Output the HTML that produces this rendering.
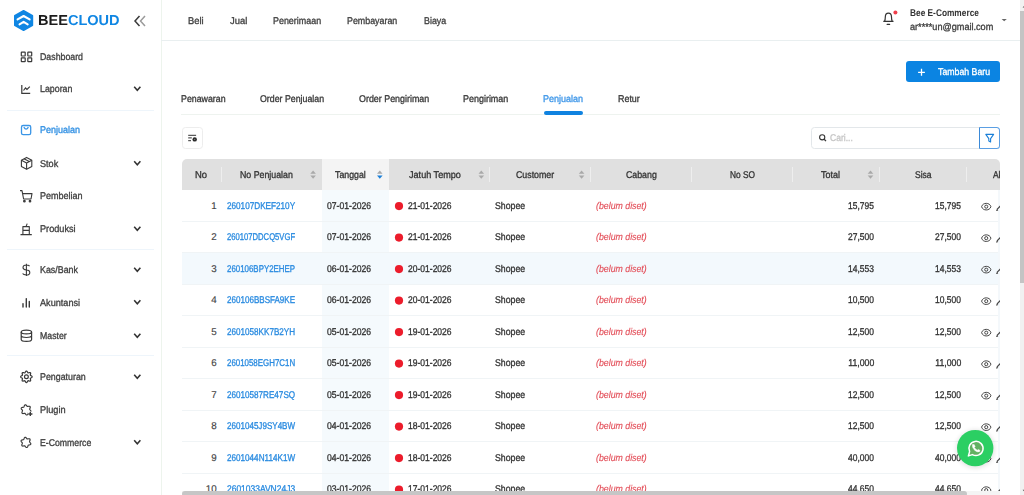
<!DOCTYPE html><html><head><meta charset="utf-8"><style>

*{margin:0;padding:0;box-sizing:border-box}
html,body{width:1024px;height:495px;overflow:hidden;background:#fff;font-family:"Liberation Sans",sans-serif;}
.abs{position:absolute;}
.t{position:absolute;white-space:nowrap;line-height:1;-webkit-text-stroke:0.32px currentColor;text-rendering:geometricPrecision;}
svg{position:absolute;overflow:visible}

</style></head><body>
<div class="abs" style="left:1020px;top:0px;width:4px;height:495px;background:#f1f1f1"></div>
<div class="abs" style="left:1020px;top:11px;width:4px;height:272px;background:#c4c4c4"></div>
<svg style="left:0;top:0" width="1" height="1"><path d="M1022.6 7.4 L1025.4 4.4 L1028.2 7.4 Z" fill="#505050"/><path d="M1022.6 489.8 L1025.4 492.8 L1028.2 489.8 Z" fill="#505050"/></svg>
<div class="abs" style="left:160.6px;top:0px;width:1.0px;height:495px;background:#edf4ed"></div>
<svg style="left:0;top:0" width="160" height="40" viewBox="0 0 160 40">
<path d="M23.6 10.7 L32.4 15.7 L32.4 25.3 L23.6 30.2 L14.8 25.3 L14.8 15.7 Z" fill="#0f86e3" stroke="#0f86e3" stroke-width="1.6" stroke-linejoin="round"/>
<path d="M17.6 19.4 L23.6 16 L29.6 19.4" fill="none" stroke="#fff" stroke-width="2.1" stroke-linecap="round" stroke-linejoin="round"/>
<path d="M19.5 24.3 L23.6 21.9 L27.7 24.3" fill="none" stroke="#fff" stroke-width="2.1" stroke-linecap="round" stroke-linejoin="round"/>
<path d="M139.5 16 L135 21 L139.5 26" fill="none" stroke="#3a3a3a" stroke-width="1.5"/>
<path d="M145 16 L140.5 21 L145 26" fill="none" stroke="#9a9a9a" stroke-width="1.5"/>
</svg>
<div id="t0" class="t" style="left:38.25px;top:14.16px;font-size:14.4px;color:#3b3b3b;font-weight:bold;font-style:normal;letter-spacing:0px;-webkit-text-stroke:0;transform:scaleX(1.0103);transform-origin:0 0;"><span style="color:#1b1b1b">BEE</span><span style="color:#0f86e3">CLOUD</span></div>
<div id="t1" class="t" style="left:39.95px;top:52.57px;font-size:9.8px;color:#404040;font-weight:normal;font-style:normal;letter-spacing:0px;transform:scaleX(0.8970);transform-origin:0 0;">Dashboard</div>
<div id="t2" class="t" style="left:39.95px;top:85.07px;font-size:9.8px;color:#404040;font-weight:normal;font-style:normal;letter-spacing:0px;transform:scaleX(0.9008);transform-origin:0 0;">Laporan</div>
<svg style="left:0;top:0" width="1" height="1"><path d="M134.2 86.8 L137.3 90.2 L140.4 86.8" fill="none" stroke="#333" stroke-width="1.6"/></svg>
<div id="t3" class="t" style="left:39.95px;top:126.07px;font-size:9.8px;color:#2f8fe3;font-weight:normal;font-style:normal;letter-spacing:0px;transform:scaleX(0.9176);transform-origin:0 0;">Penjualan</div>
<div id="t4" class="t" style="left:39.95px;top:159.57px;font-size:9.8px;color:#404040;font-weight:normal;font-style:normal;letter-spacing:0px;transform:scaleX(0.9281);transform-origin:0 0;">Stok</div>
<svg style="left:0;top:0" width="1" height="1"><path d="M134.2 161.3 L137.3 164.7 L140.4 161.3" fill="none" stroke="#333" stroke-width="1.6"/></svg>
<div id="t5" class="t" style="left:39.95px;top:192.07px;font-size:9.8px;color:#404040;font-weight:normal;font-style:normal;letter-spacing:0px;transform:scaleX(0.9201);transform-origin:0 0;">Pembelian</div>
<div id="t6" class="t" style="left:39.95px;top:225.07px;font-size:9.8px;color:#404040;font-weight:normal;font-style:normal;letter-spacing:0px;transform:scaleX(0.9338);transform-origin:0 0;">Produksi</div>
<svg style="left:0;top:0" width="1" height="1"><path d="M134.2 226.8 L137.3 230.2 L140.4 226.8" fill="none" stroke="#333" stroke-width="1.6"/></svg>
<div id="t7" class="t" style="left:39.95px;top:266.07px;font-size:9.8px;color:#404040;font-weight:normal;font-style:normal;letter-spacing:0px;transform:scaleX(0.9061);transform-origin:0 0;">Kas/Bank</div>
<svg style="left:0;top:0" width="1" height="1"><path d="M134.2 267.8 L137.3 271.2 L140.4 267.8" fill="none" stroke="#333" stroke-width="1.6"/></svg>
<div id="t8" class="t" style="left:39.95px;top:298.57px;font-size:9.8px;color:#404040;font-weight:normal;font-style:normal;letter-spacing:0px;transform:scaleX(0.9319);transform-origin:0 0;">Akuntansi</div>
<svg style="left:0;top:0" width="1" height="1"><path d="M134.2 300.3 L137.3 303.7 L140.4 300.3" fill="none" stroke="#333" stroke-width="1.6"/></svg>
<div id="t9" class="t" style="left:39.95px;top:332.07px;font-size:9.8px;color:#404040;font-weight:normal;font-style:normal;letter-spacing:0px;transform:scaleX(0.8914);transform-origin:0 0;">Master</div>
<svg style="left:0;top:0" width="1" height="1"><path d="M134.2 333.8 L137.3 337.2 L140.4 333.8" fill="none" stroke="#333" stroke-width="1.6"/></svg>
<div id="t10" class="t" style="left:39.95px;top:373.07px;font-size:9.8px;color:#404040;font-weight:normal;font-style:normal;letter-spacing:0px;transform:scaleX(0.9039);transform-origin:0 0;">Pengaturan</div>
<svg style="left:0;top:0" width="1" height="1"><path d="M134.2 374.8 L137.3 378.2 L140.4 374.8" fill="none" stroke="#333" stroke-width="1.6"/></svg>
<div id="t11" class="t" style="left:39.95px;top:405.57px;font-size:9.8px;color:#404040;font-weight:normal;font-style:normal;letter-spacing:0px;transform:scaleX(0.9400);transform-origin:0 0;">Plugin</div>
<div id="t12" class="t" style="left:39.95px;top:438.57px;font-size:9.8px;color:#404040;font-weight:normal;font-style:normal;letter-spacing:0px;transform:scaleX(0.8890);transform-origin:0 0;">E-Commerce</div>
<svg style="left:0;top:0" width="1" height="1"><path d="M134.2 440.3 L137.3 443.7 L140.4 440.3" fill="none" stroke="#333" stroke-width="1.6"/></svg>
<div class="abs" style="left:7px;top:109.5px;width:147px;height:1.0px;background:#eef5fb"></div>
<div class="abs" style="left:7px;top:249.0px;width:147px;height:1.0px;background:#eef5fb"></div>
<div class="abs" style="left:7px;top:355.0px;width:147px;height:1.0px;background:#eef5fb"></div>

<svg style="left:0;top:0" width="160" height="495">
<g fill="none" stroke="#3a3a3a" stroke-width="1.2">
 <rect x="21.3" y="52.1" width="3.9" height="3.9" rx="0.5"/>
 <rect x="27.8" y="52.1" width="3.9" height="3.9" rx="0.5"/>
 <rect x="21.3" y="57.8" width="3.9" height="3.9" rx="0.5"/>
 <rect x="27.8" y="57.8" width="3.9" height="3.9" rx="0.5"/>
 <path d="M21.8 85 V93.4 H30.2"/>
 <path d="M23.5 90.5 L25.5 88 L27 89.5 L29.8 86.6"/>
</g>
<g fill="none" stroke="#3a95e6" stroke-width="1.3">
 <rect x="21.5" y="125.5" width="9.2" height="9.2" rx="1.6"/>
 <path d="M23.8 127.2 Q26.1 131 28.4 127.2"/>
</g>
<g fill="none" stroke="#3a3a3a" stroke-width="1.1" stroke-linejoin="round">
 <path d="M26.6 157.4 L31.8 160.2 L31.8 166.4 L26.6 169.2 L21.4 166.4 L21.4 160.2 Z"/>
 <path d="M21.4 160.2 L26.6 163 L31.8 160.2 M26.6 163 V169.2 M24 158.8 L29.2 161.6"/>
 <path d="M20 190.6 H22 L23.6 199 H31 L32 193.6 H22.8"/>
 <circle cx="24.4" cy="201.2" r="0.8" fill="#3a3a3a"/><circle cx="30" cy="201.2" r="0.8" fill="#3a3a3a"/>
 <path d="M20.5 234.6 H31.8 M22.9 234.6 V226.6 H29.3 V234.6 M22.9 230.4 H29.3 M26 226.6 L27.2 223.6"/>
 <path d="M26.4 263.8 V276 M29.6 266.2 Q28.6 265 26.4 265 Q23 265 23 267.6 Q23 269.8 26.4 270 Q29.8 270.2 29.8 272.4 Q29.8 275 26.4 275 Q23.4 275 22.6 273.6"/>
</g>
<g fill="none" stroke="#3a3a3a" stroke-width="1.4" stroke-linecap="round">
 <path d="M23 303.6 V307 M26.3 298.6 V307 M29.3 301.4 V307"/>
</g>
<g fill="none" stroke="#3a3a3a" stroke-width="1.2">
 <ellipse cx="26.4" cy="332" rx="5.2" ry="1.9"/>
 <path d="M21.2 332 V339.4 Q21.2 341.3 26.4 341.3 Q31.6 341.3 31.6 339.4 V332 M21.2 335.6 Q21.2 337.5 26.4 337.5 Q31.6 337.5 31.6 335.6"/>
 <circle cx="26.4" cy="376.8" r="1.9"/>
 <path d="M32.15 376.80 L32.04 377.17 L31.73 377.50 L31.30 377.78 L30.87 378.00 L30.52 378.20 L30.33 378.43 L30.30 378.72 L30.41 379.11 L30.56 379.58 L30.66 380.07 L30.65 380.52 L30.47 380.87 L30.12 381.05 L29.67 381.06 L29.18 380.96 L28.71 380.81 L28.32 380.70 L28.03 380.73 L27.80 380.92 L27.60 381.27 L27.38 381.70 L27.10 382.13 L26.77 382.44 L26.40 382.55 L26.03 382.44 L25.70 382.13 L25.42 381.70 L25.20 381.27 L25.00 380.92 L24.77 380.73 L24.48 380.70 L24.09 380.81 L23.62 380.96 L23.13 381.06 L22.68 381.05 L22.33 380.87 L22.15 380.52 L22.14 380.07 L22.24 379.58 L22.39 379.11 L22.50 378.72 L22.47 378.43 L22.28 378.20 L21.93 378.00 L21.50 377.78 L21.07 377.50 L20.76 377.17 L20.65 376.80 L20.76 376.43 L21.07 376.10 L21.50 375.82 L21.93 375.60 L22.28 375.40 L22.47 375.17 L22.50 374.88 L22.39 374.49 L22.24 374.02 L22.14 373.53 L22.15 373.08 L22.33 372.73 L22.68 372.55 L23.13 372.54 L23.62 372.64 L24.09 372.79 L24.48 372.90 L24.77 372.87 L25.00 372.68 L25.20 372.33 L25.42 371.90 L25.70 371.47 L26.03 371.16 L26.40 371.05 L26.77 371.16 L27.10 371.47 L27.38 371.90 L27.60 372.33 L27.80 372.68 L28.03 372.87 L28.32 372.90 L28.71 372.79 L29.18 372.64 L29.67 372.54 L30.12 372.55 L30.47 372.73 L30.65 373.08 L30.66 373.53 L30.56 374.02 L30.41 374.49 L30.30 374.88 L30.33 375.17 L30.52 375.40 L30.87 375.60 L31.30 375.82 L31.73 376.10 L32.04 376.43 Z" stroke-linejoin="round"/>
 <path d="M30.12 409.90 L30.48 410.28 L30.80 410.73 L30.98 411.21 L30.94 411.66 L30.68 412.03 L30.24 412.29 L29.70 412.42 L29.18 412.49 L28.75 412.55 L28.45 412.70 L28.25 412.97 L28.11 413.39 L27.96 413.89 L27.73 414.39 L27.41 414.78 L26.99 414.97 L26.54 414.93 L26.10 414.67 L25.72 414.28 L25.40 413.86 L25.13 413.52 L24.85 413.33 L24.51 413.30 L24.09 413.39 L23.58 413.50 L23.03 413.56 L22.53 413.47 L22.15 413.21 L21.96 412.80 L21.96 412.29 L22.11 411.76 L22.32 411.28 L22.48 410.87 L22.51 410.53 L22.36 410.23 L22.08 409.90 L21.72 409.52 L21.40 409.07 L21.22 408.59 L21.26 408.14 L21.52 407.77 L21.96 407.51 L22.50 407.38 L23.02 407.31 L23.45 407.25 L23.75 407.10 L23.95 406.83 L24.09 406.41 L24.24 405.91 L24.47 405.41 L24.79 405.02 L25.21 404.83 L25.66 404.87 L26.10 405.12 L26.48 405.52 L26.80 405.94 L27.07 406.28 L27.35 406.47 L27.69 406.50 L28.11 406.41 L28.62 406.30 L29.17 406.24 L29.67 406.33 L30.05 406.59 L30.24 407.00 L30.24 407.51 L30.09 408.04 L29.88 408.52 L29.72 408.93 L29.69 409.27 L29.84 409.57 Z" stroke-width="1.15" stroke-linejoin="round"/>
 <rect x="27.9" y="411.6" width="5" height="5" fill="#fff" stroke="none"/>
 <path d="M30.3 411.9 V416.1 M28.2 414 H32.4" stroke-width="1.35"/>
 <path d="M29.98 442.40 L30.33 442.78 L30.65 443.23 L30.83 443.71 L30.79 444.16 L30.53 444.53 L30.09 444.79 L29.55 444.92 L29.03 444.99 L28.60 445.05 L28.30 445.20 L28.10 445.47 L27.96 445.89 L27.81 446.39 L27.58 446.89 L27.26 447.28 L26.84 447.47 L26.39 447.43 L25.95 447.17 L25.57 446.78 L25.25 446.36 L24.98 446.02 L24.70 445.83 L24.36 445.80 L23.94 445.89 L23.43 446.00 L22.88 446.06 L22.38 445.97 L22.00 445.71 L21.81 445.30 L21.81 444.79 L21.96 444.26 L22.17 443.78 L22.33 443.37 L22.36 443.03 L22.21 442.73 L21.93 442.40 L21.57 442.02 L21.25 441.57 L21.07 441.09 L21.11 440.64 L21.37 440.27 L21.81 440.01 L22.35 439.88 L22.87 439.81 L23.30 439.75 L23.60 439.60 L23.80 439.33 L23.94 438.91 L24.09 438.41 L24.32 437.91 L24.64 437.52 L25.06 437.33 L25.51 437.37 L25.95 437.62 L26.33 438.02 L26.65 438.44 L26.92 438.78 L27.20 438.97 L27.54 439.00 L27.96 438.91 L28.47 438.80 L29.02 438.74 L29.52 438.83 L29.90 439.09 L30.09 439.50 L30.09 440.01 L29.94 440.54 L29.73 441.02 L29.57 441.43 L29.54 441.77 L29.69 442.07 Z" stroke-width="1.15" stroke-linejoin="round"/>
</g>
</svg>
<div class="abs" style="left:161px;top:39.5px;width:859px;height:1.0px;background:#e9eff0"></div>
<div id="t13" class="t" style="left:187.85px;top:16.57px;font-size:9.8px;color:#404040;font-weight:normal;font-style:normal;letter-spacing:0px;transform:scaleX(0.9545);transform-origin:0 0;">Beli</div>
<div id="t14" class="t" style="left:229.75px;top:16.57px;font-size:9.8px;color:#404040;font-weight:normal;font-style:normal;letter-spacing:0px;transform:scaleX(0.9619);transform-origin:0 0;">Jual</div>
<div id="t15" class="t" style="left:273.25px;top:16.57px;font-size:9.8px;color:#404040;font-weight:normal;font-style:normal;letter-spacing:0px;transform:scaleX(0.9105);transform-origin:0 0;">Penerimaan</div>
<div id="t16" class="t" style="left:347.05px;top:16.57px;font-size:9.8px;color:#404040;font-weight:normal;font-style:normal;letter-spacing:0px;transform:scaleX(0.9053);transform-origin:0 0;">Pembayaran</div>
<div id="t17" class="t" style="left:423.55px;top:16.57px;font-size:9.8px;color:#404040;font-weight:normal;font-style:normal;letter-spacing:0px;transform:scaleX(0.9055);transform-origin:0 0;">Biaya</div>
<svg style="left:0;top:0" width="1" height="1">
<path d="M883.3 21.4 H893.5 M884.5 21.4 Q885.3 19.8 885.3 17 Q885.4 13.1 888.4 13.1 Q891.4 13.1 891.5 17 Q891.5 19.8 892.3 21.4" fill="none" stroke="#333" stroke-width="1.2" stroke-linejoin="round"/>
<path d="M887.2 24.4 H889.6" stroke="#333" stroke-width="1.3" stroke-linecap="round"/>
<circle cx="895.4" cy="12.5" r="2" fill="#f0404c"/>
<path d="M1001.6 18.9 L1006.8 18.9 L1004.2 21.3 Z" fill="#666"/>
</svg>
<div id="t18" class="t" style="left:910.25px;top:8.67px;font-size:9.8px;color:#333;font-weight:bold;font-style:normal;letter-spacing:0px;-webkit-text-stroke:0;transform:scaleX(0.8491);transform-origin:0 0;">Bee E-Commerce</div>
<div id="t19" class="t" style="left:910.25px;top:23.47px;font-size:9.8px;color:#404040;font-weight:normal;font-style:normal;letter-spacing:0px;transform:scaleX(0.9312);transform-origin:0 0;">ar****un@gmail.com</div>
<div class="abs" style="left:906.3px;top:60.8px;width:93.70000000000005px;height:21.400000000000006px;background:#0b84e2;border-radius:3px"></div>
<svg style="left:0;top:0" width="1" height="1"><path d="M921.5 68.8 V75.8 M918.1 72.3 H924.9" stroke="#fff" stroke-width="1.3"/></svg>
<div id="t20" class="t" style="left:937.65px;top:67.57px;font-size:9.8px;color:#fff;font-weight:normal;font-style:normal;letter-spacing:0px;transform:scaleX(0.8939);transform-origin:0 0;">Tambah Baru</div>
<div id="t21" class="t" style="left:181.15px;top:94.97px;font-size:9.8px;color:#383838;font-weight:normal;font-style:normal;letter-spacing:0px;transform:scaleX(0.8996);transform-origin:0 0;">Penawaran</div>
<div id="t22" class="t" style="left:260.15px;top:94.97px;font-size:9.8px;color:#383838;font-weight:normal;font-style:normal;letter-spacing:0px;transform:scaleX(0.8985);transform-origin:0 0;">Order Penjualan</div>
<div id="t23" class="t" style="left:358.65px;top:94.97px;font-size:9.8px;color:#383838;font-weight:normal;font-style:normal;letter-spacing:0px;transform:scaleX(0.9078);transform-origin:0 0;">Order Pengiriman</div>
<div id="t24" class="t" style="left:463.30px;top:94.97px;font-size:9.8px;color:#383838;font-weight:normal;font-style:normal;letter-spacing:0px;transform:scaleX(0.9140);transform-origin:0 0;">Pengiriman</div>
<div id="t25" class="t" style="left:543.35px;top:94.97px;font-size:9.8px;color:#3d96e8;font-weight:normal;font-style:normal;letter-spacing:0px;transform:scaleX(0.9199);transform-origin:0 0;">Penjualan</div>
<div id="t26" class="t" style="left:617.65px;top:94.97px;font-size:9.8px;color:#383838;font-weight:normal;font-style:normal;letter-spacing:0px;transform:scaleX(0.9095);transform-origin:0 0;">Retur</div>
<div class="abs" style="left:181.3px;top:114.3px;width:818.7px;height:1.0px;background:#eef3ef"></div>
<div class="abs" style="left:543.8px;top:110.6px;width:39.5px;height:4.1000000000000085px;background:#0f82e0;border-radius:2px"></div>
<div class="abs" style="left:181.6px;top:127.1px;width:21.599999999999994px;height:21.80000000000001px;border:1px solid #ededed;border-radius:3.5px;background:#fff"></div>
<svg style="left:0;top:0" width="1" height="1"><g stroke="#333" stroke-width="1">
<path d="M188.2 135.3 H196.1 M188.2 137.9 H191.8 M188.2 140.7 H191"/></g>
<circle cx="194.7" cy="139.4" r="2.2" fill="#2a2a2a"/><circle cx="194.7" cy="139.4" r="0.6" fill="#888"/></svg>
<div class="abs" style="left:811px;top:127.2px;width:169px;height:21.60000000000001px;border:1px solid #e3e7ea;border-radius:3.5px 0 0 3.5px;background:#fff"></div>
<div class="abs" style="left:979px;top:127.2px;width:21.399999999999977px;height:21.60000000000001px;border:1px solid #5b9fe3;border-left-color:#3b8ad8;border-radius:0 3.5px 3.5px 0;background:#fff"></div>
<svg style="left:0;top:0" width="1" height="1">
<circle cx="822.2" cy="137.3" r="2.6" fill="none" stroke="#333" stroke-width="1.1"/>
<path d="M824.2 139.3 L826 141.1" stroke="#333" stroke-width="1.3"/>
<path d="M985.8 134.4 H993.6 L990.6 138.6 V142 L988.8 141 V138.6 Z" fill="none" stroke="#1a7fd8" stroke-width="1.1" stroke-linejoin="round"/>
</svg>
<div id="t27" class="t" style="left:830.35px;top:133.97px;font-size:9.8px;color:#c6c6c6;font-weight:normal;font-style:normal;letter-spacing:0px;transform:scaleX(0.8722);transform-origin:0 0;">Cari...</div>
<div class="abs" style="left:181.6px;top:159.2px;width:818.4px;height:30.80000000000001px;background:#e0e0e0;border-radius:5px 5px 0 0"></div>
<div class="abs" style="left:322.4px;top:159.2px;width:66.80000000000001px;height:30.80000000000001px;background:#f4f4f4"></div>
<div class="abs" style="left:322.4px;top:190px;width:66.80000000000001px;height:305px;background:#f5fafd"></div>
<div class="abs" style="left:181.6px;top:252.5px;width:818.4px;height:31.5px;background:#f3f9fd"></div>
<div class="abs" style="left:181.6px;top:221px;width:818.4px;height:1px;background:#f0f4f6"></div>
<div class="abs" style="left:181.6px;top:252px;width:818.4px;height:1px;background:#f0f4f6"></div>
<div class="abs" style="left:181.6px;top:284px;width:818.4px;height:1px;background:#f0f4f6"></div>
<div class="abs" style="left:181.6px;top:315px;width:818.4px;height:1px;background:#f0f4f6"></div>
<div class="abs" style="left:181.6px;top:347px;width:818.4px;height:1px;background:#f0f4f6"></div>
<div class="abs" style="left:181.6px;top:378px;width:818.4px;height:1px;background:#f0f4f6"></div>
<div class="abs" style="left:181.6px;top:410px;width:818.4px;height:1px;background:#f0f4f6"></div>
<div class="abs" style="left:181.6px;top:441px;width:818.4px;height:1px;background:#f0f4f6"></div>
<div class="abs" style="left:181.6px;top:473px;width:818.4px;height:1px;background:#f0f4f6"></div>
<div class="abs" style="left:181.6px;top:504px;width:818.4px;height:1px;background:#f0f4f6"></div>
<div class="abs" style="left:220.9px;top:167px;width:1.0px;height:15px;background:#eeeeee"></div>
<div class="abs" style="left:488.9px;top:167px;width:1.0px;height:15px;background:#eeeeee"></div>
<div class="abs" style="left:590.0px;top:167px;width:1.0px;height:15px;background:#eeeeee"></div>
<div class="abs" style="left:690.9px;top:167px;width:1.0px;height:15px;background:#eeeeee"></div>
<div class="abs" style="left:792.0px;top:167px;width:1.0px;height:15px;background:#eeeeee"></div>
<div class="abs" style="left:878.9px;top:167px;width:1.0px;height:15px;background:#eeeeee"></div>
<div class="abs" style="left:966.2px;top:167px;width:1.0px;height:15px;background:#eeeeee"></div>
<div class="abs" style="left:997.6px;top:189.5px;width:2.3999999999999773px;height:301.5px;background:#f4f8fb"></div>
<div id="t28" class="t" style="left:195.35px;top:170.77px;font-size:9.8px;color:#333;font-weight:normal;font-style:normal;letter-spacing:0px;transform:scaleX(0.9656);transform-origin:0 0;">No</div>
<div id="t29" class="t" style="left:240.15px;top:170.77px;font-size:9.8px;color:#333;font-weight:normal;font-style:normal;letter-spacing:0px;transform:scaleX(0.8975);transform-origin:0 0;">No Penjualan</div>
<div id="t30" class="t" style="left:335.25px;top:170.77px;font-size:9.8px;color:#333;font-weight:normal;font-style:normal;letter-spacing:0px;transform:scaleX(0.8972);transform-origin:0 0;">Tanggal</div>
<div id="t31" class="t" style="left:408.55px;top:170.77px;font-size:9.8px;color:#333;font-weight:normal;font-style:normal;letter-spacing:0px;transform:scaleX(0.9281);transform-origin:0 0;">Jatuh Tempo</div>
<div id="t32" class="t" style="left:516.15px;top:170.77px;font-size:9.8px;color:#333;font-weight:normal;font-style:normal;letter-spacing:0px;transform:scaleX(0.8995);transform-origin:0 0;">Customer</div>
<div id="t33" class="t" style="left:626.05px;top:170.77px;font-size:9.8px;color:#333;font-weight:normal;font-style:normal;letter-spacing:0px;transform:scaleX(0.8972);transform-origin:0 0;">Cabang</div>
<div id="t34" class="t" style="left:729.75px;top:170.77px;font-size:9.8px;color:#333;font-weight:normal;font-style:normal;letter-spacing:0px;transform:scaleX(0.8502);transform-origin:0 0;">No SO</div>
<div id="t35" class="t" style="left:821.45px;top:170.77px;font-size:9.8px;color:#333;font-weight:normal;font-style:normal;letter-spacing:0px;transform:scaleX(0.9177);transform-origin:0 0;">Total</div>
<div id="t36" class="t" style="left:915.15px;top:170.77px;font-size:9.8px;color:#333;font-weight:normal;font-style:normal;letter-spacing:0px;transform:scaleX(0.8708);transform-origin:0 0;">Sisa</div>
<div class="abs" style="left:966.7px;top:159.2px;width:33.3px;height:30px;overflow:hidden">
<div id="t37" class="t" style="left:26.45px;top:11.57px;font-size:9.8px;color:#333;font-weight:normal;font-style:normal;letter-spacing:0px;transform:scaleX(0.86);transform-origin:0 0;">Aksi</div>
</div>
<svg style="left:0;top:0" width="1" height="1"><path d="M310.3 173.8 L313.1 170.4 L315.90000000000003 173.8 Z" fill="#a9a9a9"/><path d="M310.3 175.4 L313.1 178.8 L315.90000000000003 175.4 Z" fill="#a9a9a9"/></svg>
<svg style="left:0;top:0" width="1" height="1"><path d="M377 173.8 L379.8 170.4 L382.6 173.8 Z" fill="#a9a9a9"/><path d="M377 175.4 L379.8 178.8 L382.6 175.4 Z" fill="#1a7fd8"/></svg>
<svg style="left:0;top:0" width="1" height="1"><path d="M478.5 173.8 L481.3 170.4 L484.1 173.8 Z" fill="#a9a9a9"/><path d="M478.5 175.4 L481.3 178.8 L484.1 175.4 Z" fill="#a9a9a9"/></svg>
<svg style="left:0;top:0" width="1" height="1"><path d="M578.8 173.8 L581.5999999999999 170.4 L584.4 173.8 Z" fill="#a9a9a9"/><path d="M578.8 175.4 L581.5999999999999 178.8 L584.4 175.4 Z" fill="#a9a9a9"/></svg>
<svg style="left:0;top:0" width="1" height="1"><path d="M867.7 173.8 L870.5 170.4 L873.3000000000001 173.8 Z" fill="#a9a9a9"/><path d="M867.7 175.4 L870.5 178.8 L873.3000000000001 175.4 Z" fill="#a9a9a9"/></svg>
<div class="abs" style="left:0;top:0;width:1024px;height:495px;clip-path:inset(0 24px 4px 0)">
<div id="t38" class="t" style="right:807.35px;top:201.72px;text-align:right;font-size:9.8px;color:#444;font-weight:normal;font-style:normal;letter-spacing:0px;-webkit-text-stroke:0.15px currentColor;">1</div>
<div id="t39" class="t" style="left:226.85px;top:201.72px;font-size:9.8px;color:#2a8be0;font-weight:normal;font-style:normal;letter-spacing:0px;transform:scaleX(0.8335);transform-origin:0 0;">260107DKEF210Y</div>
<div id="t40" class="t" style="left:327.25px;top:201.72px;font-size:9.8px;color:#333;font-weight:normal;font-style:normal;letter-spacing:0px;transform:scaleX(0.8798);transform-origin:0 0;">07-01-2026</div>
<svg style="left:0;top:0" width="1" height="1"><circle cx="399" cy="206.05" r="4.1" fill="#ec1c2b"/></svg>
<div id="t41" class="t" style="left:408.05px;top:201.72px;font-size:9.8px;color:#333;font-weight:normal;font-style:normal;letter-spacing:0px;transform:scaleX(0.8698);transform-origin:0 0;">21-01-2026</div>
<div id="t42" class="t" style="left:495.45px;top:201.72px;font-size:9.8px;color:#333;font-weight:normal;font-style:normal;letter-spacing:0px;transform:scaleX(0.8910);transform-origin:0 0;">Shopee</div>
<div id="t43" class="t" style="left:596.15px;top:201.72px;font-size:9.8px;color:#e24a55;font-weight:normal;font-style:italic;letter-spacing:0px;-webkit-text-stroke:0.12px currentColor;transform:scaleX(0.8954);transform-origin:0 0;">(belum diset)</div>
<div id="t44" class="t" style="right:149.95px;top:201.72px;text-align:right;font-size:9.8px;color:#333;font-weight:normal;font-style:normal;letter-spacing:0px;transform:scaleX(0.8642);transform-origin:100% 0;">15,795</div>
<div id="t45" class="t" style="right:62.75px;top:201.72px;text-align:right;font-size:9.8px;color:#333;font-weight:normal;font-style:normal;letter-spacing:0px;transform:scaleX(0.8642);transform-origin:100% 0;">15,795</div>
<svg style="left:0;top:0" width="1" height="1"><g fill="none" stroke="#444" stroke-width="1">
<path d="M981.6 206.65 C982.7 202.25 989.8 202.25 990.9 206.65 C989.8 211.05 982.7 211.05 981.6 206.65 Z"/>
<circle cx="986.25" cy="206.65" r="1.55"/>
<path d="M997 209.45 L1001 205.25" stroke-width="1.2"/><path d="M996.7 210.95 Q996.9 209.85 997.6 209.05" stroke-width="1"/>
<path d="M996.5 211.05 L996.9 209.25 L998.3 210.45 Z" fill="#555" stroke="none"/></g></svg>
<div id="t46" class="t" style="right:807.35px;top:233.22px;text-align:right;font-size:9.8px;color:#444;font-weight:normal;font-style:normal;letter-spacing:0px;-webkit-text-stroke:0.15px currentColor;">2</div>
<div id="t47" class="t" style="left:226.85px;top:233.22px;font-size:9.8px;color:#2a8be0;font-weight:normal;font-style:normal;letter-spacing:0px;transform:scaleX(0.7816);transform-origin:0 0;">260107DDCQ5VGF</div>
<div id="t48" class="t" style="left:327.25px;top:233.22px;font-size:9.8px;color:#333;font-weight:normal;font-style:normal;letter-spacing:0px;transform:scaleX(0.8798);transform-origin:0 0;">07-01-2026</div>
<svg style="left:0;top:0" width="1" height="1"><circle cx="399" cy="237.55" r="4.1" fill="#ec1c2b"/></svg>
<div id="t49" class="t" style="left:408.05px;top:233.22px;font-size:9.8px;color:#333;font-weight:normal;font-style:normal;letter-spacing:0px;transform:scaleX(0.8698);transform-origin:0 0;">21-01-2026</div>
<div id="t50" class="t" style="left:495.45px;top:233.22px;font-size:9.8px;color:#333;font-weight:normal;font-style:normal;letter-spacing:0px;transform:scaleX(0.8910);transform-origin:0 0;">Shopee</div>
<div id="t51" class="t" style="left:596.15px;top:233.22px;font-size:9.8px;color:#e24a55;font-weight:normal;font-style:italic;letter-spacing:0px;-webkit-text-stroke:0.12px currentColor;transform:scaleX(0.8954);transform-origin:0 0;">(belum diset)</div>
<div id="t52" class="t" style="right:149.95px;top:233.22px;text-align:right;font-size:9.8px;color:#333;font-weight:normal;font-style:normal;letter-spacing:0px;transform:scaleX(0.8642);transform-origin:100% 0;">27,500</div>
<div id="t53" class="t" style="right:62.75px;top:233.22px;text-align:right;font-size:9.8px;color:#333;font-weight:normal;font-style:normal;letter-spacing:0px;transform:scaleX(0.8642);transform-origin:100% 0;">27,500</div>
<svg style="left:0;top:0" width="1" height="1"><g fill="none" stroke="#444" stroke-width="1">
<path d="M981.6 238.15 C982.7 233.75 989.8 233.75 990.9 238.15 C989.8 242.55 982.7 242.55 981.6 238.15 Z"/>
<circle cx="986.25" cy="238.15" r="1.55"/>
<path d="M997 240.95 L1001 236.75" stroke-width="1.2"/><path d="M996.7 242.45 Q996.9 241.35 997.6 240.55" stroke-width="1"/>
<path d="M996.5 242.55 L996.9 240.75 L998.3 241.95 Z" fill="#555" stroke="none"/></g></svg>
<div id="t54" class="t" style="right:807.35px;top:264.72px;text-align:right;font-size:9.8px;color:#444;font-weight:normal;font-style:normal;letter-spacing:0px;-webkit-text-stroke:0.15px currentColor;">3</div>
<div id="t55" class="t" style="left:226.85px;top:264.72px;font-size:9.8px;color:#2a8be0;font-weight:normal;font-style:normal;letter-spacing:0px;transform:scaleX(0.8067);transform-origin:0 0;">260106BPY2EHEP</div>
<div id="t56" class="t" style="left:327.25px;top:264.72px;font-size:9.8px;color:#333;font-weight:normal;font-style:normal;letter-spacing:0px;transform:scaleX(0.8798);transform-origin:0 0;">06-01-2026</div>
<svg style="left:0;top:0" width="1" height="1"><circle cx="399" cy="269.05" r="4.1" fill="#ec1c2b"/></svg>
<div id="t57" class="t" style="left:408.05px;top:264.72px;font-size:9.8px;color:#333;font-weight:normal;font-style:normal;letter-spacing:0px;transform:scaleX(0.8698);transform-origin:0 0;">20-01-2026</div>
<div id="t58" class="t" style="left:495.45px;top:264.72px;font-size:9.8px;color:#333;font-weight:normal;font-style:normal;letter-spacing:0px;transform:scaleX(0.8910);transform-origin:0 0;">Shopee</div>
<div id="t59" class="t" style="left:596.15px;top:264.72px;font-size:9.8px;color:#e24a55;font-weight:normal;font-style:italic;letter-spacing:0px;-webkit-text-stroke:0.12px currentColor;transform:scaleX(0.8954);transform-origin:0 0;">(belum diset)</div>
<div id="t60" class="t" style="right:149.95px;top:264.72px;text-align:right;font-size:9.8px;color:#333;font-weight:normal;font-style:normal;letter-spacing:0px;transform:scaleX(0.8642);transform-origin:100% 0;">14,553</div>
<div id="t61" class="t" style="right:62.75px;top:264.72px;text-align:right;font-size:9.8px;color:#333;font-weight:normal;font-style:normal;letter-spacing:0px;transform:scaleX(0.8642);transform-origin:100% 0;">14,553</div>
<svg style="left:0;top:0" width="1" height="1"><g fill="none" stroke="#444" stroke-width="1">
<path d="M981.6 269.65 C982.7 265.25 989.8 265.25 990.9 269.65 C989.8 274.05 982.7 274.05 981.6 269.65 Z"/>
<circle cx="986.25" cy="269.65" r="1.55"/>
<path d="M997 272.45 L1001 268.25" stroke-width="1.2"/><path d="M996.7 273.95 Q996.9 272.85 997.6 272.05" stroke-width="1"/>
<path d="M996.5 274.05 L996.9 272.25 L998.3 273.45 Z" fill="#555" stroke="none"/></g></svg>
<div id="t62" class="t" style="right:807.35px;top:296.22px;text-align:right;font-size:9.8px;color:#444;font-weight:normal;font-style:normal;letter-spacing:0px;-webkit-text-stroke:0.15px currentColor;">4</div>
<div id="t63" class="t" style="left:226.85px;top:296.22px;font-size:9.8px;color:#2a8be0;font-weight:normal;font-style:normal;letter-spacing:0px;transform:scaleX(0.8225);transform-origin:0 0;">260106BBSFA9KE</div>
<div id="t64" class="t" style="left:327.25px;top:296.22px;font-size:9.8px;color:#333;font-weight:normal;font-style:normal;letter-spacing:0px;transform:scaleX(0.8798);transform-origin:0 0;">06-01-2026</div>
<svg style="left:0;top:0" width="1" height="1"><circle cx="399" cy="300.55" r="4.1" fill="#ec1c2b"/></svg>
<div id="t65" class="t" style="left:408.05px;top:296.22px;font-size:9.8px;color:#333;font-weight:normal;font-style:normal;letter-spacing:0px;transform:scaleX(0.8698);transform-origin:0 0;">20-01-2026</div>
<div id="t66" class="t" style="left:495.45px;top:296.22px;font-size:9.8px;color:#333;font-weight:normal;font-style:normal;letter-spacing:0px;transform:scaleX(0.8910);transform-origin:0 0;">Shopee</div>
<div id="t67" class="t" style="left:596.15px;top:296.22px;font-size:9.8px;color:#e24a55;font-weight:normal;font-style:italic;letter-spacing:0px;-webkit-text-stroke:0.12px currentColor;transform:scaleX(0.8954);transform-origin:0 0;">(belum diset)</div>
<div id="t68" class="t" style="right:149.95px;top:296.22px;text-align:right;font-size:9.8px;color:#333;font-weight:normal;font-style:normal;letter-spacing:0px;transform:scaleX(0.8642);transform-origin:100% 0;">10,500</div>
<div id="t69" class="t" style="right:62.75px;top:296.22px;text-align:right;font-size:9.8px;color:#333;font-weight:normal;font-style:normal;letter-spacing:0px;transform:scaleX(0.8642);transform-origin:100% 0;">10,500</div>
<svg style="left:0;top:0" width="1" height="1"><g fill="none" stroke="#444" stroke-width="1">
<path d="M981.6 301.15 C982.7 296.75 989.8 296.75 990.9 301.15 C989.8 305.55 982.7 305.55 981.6 301.15 Z"/>
<circle cx="986.25" cy="301.15" r="1.55"/>
<path d="M997 303.95 L1001 299.75" stroke-width="1.2"/><path d="M996.7 305.45 Q996.9 304.35 997.6 303.55" stroke-width="1"/>
<path d="M996.5 305.55 L996.9 303.75 L998.3 304.95 Z" fill="#555" stroke="none"/></g></svg>
<div id="t70" class="t" style="right:807.35px;top:327.72px;text-align:right;font-size:9.8px;color:#444;font-weight:normal;font-style:normal;letter-spacing:0px;-webkit-text-stroke:0.15px currentColor;">5</div>
<div id="t71" class="t" style="left:226.85px;top:327.72px;font-size:9.8px;color:#2a8be0;font-weight:normal;font-style:normal;letter-spacing:0px;transform:scaleX(0.8280);transform-origin:0 0;">2601058KK7B2YH</div>
<div id="t72" class="t" style="left:327.25px;top:327.72px;font-size:9.8px;color:#333;font-weight:normal;font-style:normal;letter-spacing:0px;transform:scaleX(0.8798);transform-origin:0 0;">05-01-2026</div>
<svg style="left:0;top:0" width="1" height="1"><circle cx="399" cy="332.05" r="4.1" fill="#ec1c2b"/></svg>
<div id="t73" class="t" style="left:408.05px;top:327.72px;font-size:9.8px;color:#333;font-weight:normal;font-style:normal;letter-spacing:0px;transform:scaleX(0.8698);transform-origin:0 0;">19-01-2026</div>
<div id="t74" class="t" style="left:495.45px;top:327.72px;font-size:9.8px;color:#333;font-weight:normal;font-style:normal;letter-spacing:0px;transform:scaleX(0.8910);transform-origin:0 0;">Shopee</div>
<div id="t75" class="t" style="left:596.15px;top:327.72px;font-size:9.8px;color:#e24a55;font-weight:normal;font-style:italic;letter-spacing:0px;-webkit-text-stroke:0.12px currentColor;transform:scaleX(0.8954);transform-origin:0 0;">(belum diset)</div>
<div id="t76" class="t" style="right:149.95px;top:327.72px;text-align:right;font-size:9.8px;color:#333;font-weight:normal;font-style:normal;letter-spacing:0px;transform:scaleX(0.8642);transform-origin:100% 0;">12,500</div>
<div id="t77" class="t" style="right:62.75px;top:327.72px;text-align:right;font-size:9.8px;color:#333;font-weight:normal;font-style:normal;letter-spacing:0px;transform:scaleX(0.8642);transform-origin:100% 0;">12,500</div>
<svg style="left:0;top:0" width="1" height="1"><g fill="none" stroke="#444" stroke-width="1">
<path d="M981.6 332.65 C982.7 328.25 989.8 328.25 990.9 332.65 C989.8 337.05 982.7 337.05 981.6 332.65 Z"/>
<circle cx="986.25" cy="332.65" r="1.55"/>
<path d="M997 335.45 L1001 331.25" stroke-width="1.2"/><path d="M996.7 336.95 Q996.9 335.85 997.6 335.05" stroke-width="1"/>
<path d="M996.5 337.05 L996.9 335.25 L998.3 336.45 Z" fill="#555" stroke="none"/></g></svg>
<div id="t78" class="t" style="right:807.35px;top:359.22px;text-align:right;font-size:9.8px;color:#444;font-weight:normal;font-style:normal;letter-spacing:0px;-webkit-text-stroke:0.15px currentColor;">6</div>
<div id="t79" class="t" style="left:226.85px;top:359.22px;font-size:9.8px;color:#2a8be0;font-weight:normal;font-style:normal;letter-spacing:0px;transform:scaleX(0.8067);transform-origin:0 0;">2601058EGH7C1N</div>
<div id="t80" class="t" style="left:327.25px;top:359.22px;font-size:9.8px;color:#333;font-weight:normal;font-style:normal;letter-spacing:0px;transform:scaleX(0.8798);transform-origin:0 0;">05-01-2026</div>
<svg style="left:0;top:0" width="1" height="1"><circle cx="399" cy="363.55" r="4.1" fill="#ec1c2b"/></svg>
<div id="t81" class="t" style="left:408.05px;top:359.22px;font-size:9.8px;color:#333;font-weight:normal;font-style:normal;letter-spacing:0px;transform:scaleX(0.8698);transform-origin:0 0;">19-01-2026</div>
<div id="t82" class="t" style="left:495.45px;top:359.22px;font-size:9.8px;color:#333;font-weight:normal;font-style:normal;letter-spacing:0px;transform:scaleX(0.8910);transform-origin:0 0;">Shopee</div>
<div id="t83" class="t" style="left:596.15px;top:359.22px;font-size:9.8px;color:#e24a55;font-weight:normal;font-style:italic;letter-spacing:0px;-webkit-text-stroke:0.12px currentColor;transform:scaleX(0.8954);transform-origin:0 0;">(belum diset)</div>
<div id="t84" class="t" style="right:149.95px;top:359.22px;text-align:right;font-size:9.8px;color:#333;font-weight:normal;font-style:normal;letter-spacing:0px;transform:scaleX(0.8855);transform-origin:100% 0;">11,000</div>
<div id="t85" class="t" style="right:62.75px;top:359.22px;text-align:right;font-size:9.8px;color:#333;font-weight:normal;font-style:normal;letter-spacing:0px;transform:scaleX(0.8855);transform-origin:100% 0;">11,000</div>
<svg style="left:0;top:0" width="1" height="1"><g fill="none" stroke="#444" stroke-width="1">
<path d="M981.6 364.15 C982.7 359.75 989.8 359.75 990.9 364.15 C989.8 368.55 982.7 368.55 981.6 364.15 Z"/>
<circle cx="986.25" cy="364.15" r="1.55"/>
<path d="M997 366.95 L1001 362.75" stroke-width="1.2"/><path d="M996.7 368.45 Q996.9 367.35 997.6 366.55" stroke-width="1"/>
<path d="M996.5 368.55 L996.9 366.75 L998.3 367.95 Z" fill="#555" stroke="none"/></g></svg>
<div id="t86" class="t" style="right:807.35px;top:390.72px;text-align:right;font-size:9.8px;color:#444;font-weight:normal;font-style:normal;letter-spacing:0px;-webkit-text-stroke:0.15px currentColor;">7</div>
<div id="t87" class="t" style="left:226.85px;top:390.72px;font-size:9.8px;color:#2a8be0;font-weight:normal;font-style:normal;letter-spacing:0px;transform:scaleX(0.8280);transform-origin:0 0;">26010587RE47SQ</div>
<div id="t88" class="t" style="left:327.25px;top:390.72px;font-size:9.8px;color:#333;font-weight:normal;font-style:normal;letter-spacing:0px;transform:scaleX(0.8798);transform-origin:0 0;">05-01-2026</div>
<svg style="left:0;top:0" width="1" height="1"><circle cx="399" cy="395.05" r="4.1" fill="#ec1c2b"/></svg>
<div id="t89" class="t" style="left:408.05px;top:390.72px;font-size:9.8px;color:#333;font-weight:normal;font-style:normal;letter-spacing:0px;transform:scaleX(0.8698);transform-origin:0 0;">19-01-2026</div>
<div id="t90" class="t" style="left:495.45px;top:390.72px;font-size:9.8px;color:#333;font-weight:normal;font-style:normal;letter-spacing:0px;transform:scaleX(0.8910);transform-origin:0 0;">Shopee</div>
<div id="t91" class="t" style="left:596.15px;top:390.72px;font-size:9.8px;color:#e24a55;font-weight:normal;font-style:italic;letter-spacing:0px;-webkit-text-stroke:0.12px currentColor;transform:scaleX(0.8954);transform-origin:0 0;">(belum diset)</div>
<div id="t92" class="t" style="right:149.95px;top:390.72px;text-align:right;font-size:9.8px;color:#333;font-weight:normal;font-style:normal;letter-spacing:0px;transform:scaleX(0.8642);transform-origin:100% 0;">12,500</div>
<div id="t93" class="t" style="right:62.75px;top:390.72px;text-align:right;font-size:9.8px;color:#333;font-weight:normal;font-style:normal;letter-spacing:0px;transform:scaleX(0.8642);transform-origin:100% 0;">12,500</div>
<svg style="left:0;top:0" width="1" height="1"><g fill="none" stroke="#444" stroke-width="1">
<path d="M981.6 395.65 C982.7 391.25 989.8 391.25 990.9 395.65 C989.8 400.05 982.7 400.05 981.6 395.65 Z"/>
<circle cx="986.25" cy="395.65" r="1.55"/>
<path d="M997 398.45 L1001 394.25" stroke-width="1.2"/><path d="M996.7 399.95 Q996.9 398.85 997.6 398.05" stroke-width="1"/>
<path d="M996.5 400.05 L996.9 398.25 L998.3 399.45 Z" fill="#555" stroke="none"/></g></svg>
<div id="t94" class="t" style="right:807.35px;top:422.22px;text-align:right;font-size:9.8px;color:#444;font-weight:normal;font-style:normal;letter-spacing:0px;-webkit-text-stroke:0.15px currentColor;">8</div>
<div id="t95" class="t" style="left:226.85px;top:422.22px;font-size:9.8px;color:#2a8be0;font-weight:normal;font-style:normal;letter-spacing:0px;transform:scaleX(0.8225);transform-origin:0 0;">2601045J9SY4BW</div>
<div id="t96" class="t" style="left:327.25px;top:422.22px;font-size:9.8px;color:#333;font-weight:normal;font-style:normal;letter-spacing:0px;transform:scaleX(0.8798);transform-origin:0 0;">04-01-2026</div>
<svg style="left:0;top:0" width="1" height="1"><circle cx="399" cy="426.55" r="4.1" fill="#ec1c2b"/></svg>
<div id="t97" class="t" style="left:408.05px;top:422.22px;font-size:9.8px;color:#333;font-weight:normal;font-style:normal;letter-spacing:0px;transform:scaleX(0.8698);transform-origin:0 0;">18-01-2026</div>
<div id="t98" class="t" style="left:495.45px;top:422.22px;font-size:9.8px;color:#333;font-weight:normal;font-style:normal;letter-spacing:0px;transform:scaleX(0.8910);transform-origin:0 0;">Shopee</div>
<div id="t99" class="t" style="left:596.15px;top:422.22px;font-size:9.8px;color:#e24a55;font-weight:normal;font-style:italic;letter-spacing:0px;-webkit-text-stroke:0.12px currentColor;transform:scaleX(0.8954);transform-origin:0 0;">(belum diset)</div>
<div id="t100" class="t" style="right:149.95px;top:422.22px;text-align:right;font-size:9.8px;color:#333;font-weight:normal;font-style:normal;letter-spacing:0px;transform:scaleX(0.8642);transform-origin:100% 0;">12,500</div>
<div id="t101" class="t" style="right:62.75px;top:422.22px;text-align:right;font-size:9.8px;color:#333;font-weight:normal;font-style:normal;letter-spacing:0px;transform:scaleX(0.8642);transform-origin:100% 0;">12,500</div>
<svg style="left:0;top:0" width="1" height="1"><g fill="none" stroke="#444" stroke-width="1">
<path d="M981.6 427.15 C982.7 422.75 989.8 422.75 990.9 427.15 C989.8 431.55 982.7 431.55 981.6 427.15 Z"/>
<circle cx="986.25" cy="427.15" r="1.55"/>
<path d="M997 429.95 L1001 425.75" stroke-width="1.2"/><path d="M996.7 431.45 Q996.9 430.35 997.6 429.55" stroke-width="1"/>
<path d="M996.5 431.55 L996.9 429.75 L998.3 430.95 Z" fill="#555" stroke="none"/></g></svg>
<div id="t102" class="t" style="right:807.35px;top:453.72px;text-align:right;font-size:9.8px;color:#444;font-weight:normal;font-style:normal;letter-spacing:0px;-webkit-text-stroke:0.15px currentColor;">9</div>
<div id="t103" class="t" style="left:226.85px;top:453.72px;font-size:9.8px;color:#2a8be0;font-weight:normal;font-style:normal;letter-spacing:0px;transform:scaleX(0.8297);transform-origin:0 0;">2601044N114K1W</div>
<div id="t104" class="t" style="left:327.25px;top:453.72px;font-size:9.8px;color:#333;font-weight:normal;font-style:normal;letter-spacing:0px;transform:scaleX(0.8798);transform-origin:0 0;">04-01-2026</div>
<svg style="left:0;top:0" width="1" height="1"><circle cx="399" cy="458.05" r="4.1" fill="#ec1c2b"/></svg>
<div id="t105" class="t" style="left:408.05px;top:453.72px;font-size:9.8px;color:#333;font-weight:normal;font-style:normal;letter-spacing:0px;transform:scaleX(0.8698);transform-origin:0 0;">18-01-2026</div>
<div id="t106" class="t" style="left:495.45px;top:453.72px;font-size:9.8px;color:#333;font-weight:normal;font-style:normal;letter-spacing:0px;transform:scaleX(0.8910);transform-origin:0 0;">Shopee</div>
<div id="t107" class="t" style="left:596.15px;top:453.72px;font-size:9.8px;color:#e24a55;font-weight:normal;font-style:italic;letter-spacing:0px;-webkit-text-stroke:0.12px currentColor;transform:scaleX(0.8954);transform-origin:0 0;">(belum diset)</div>
<div id="t108" class="t" style="right:149.95px;top:453.72px;text-align:right;font-size:9.8px;color:#333;font-weight:normal;font-style:normal;letter-spacing:0px;transform:scaleX(0.8642);transform-origin:100% 0;">40,000</div>
<div id="t109" class="t" style="right:62.75px;top:453.72px;text-align:right;font-size:9.8px;color:#333;font-weight:normal;font-style:normal;letter-spacing:0px;transform:scaleX(0.8642);transform-origin:100% 0;">40,000</div>
<svg style="left:0;top:0" width="1" height="1"><g fill="none" stroke="#444" stroke-width="1">
<path d="M981.6 458.65 C982.7 454.25 989.8 454.25 990.9 458.65 C989.8 463.05 982.7 463.05 981.6 458.65 Z"/>
<circle cx="986.25" cy="458.65" r="1.55"/>
<path d="M997 461.45 L1001 457.25" stroke-width="1.2"/><path d="M996.7 462.95 Q996.9 461.85 997.6 461.05" stroke-width="1"/>
<path d="M996.5 463.05 L996.9 461.25 L998.3 462.45 Z" fill="#555" stroke="none"/></g></svg>
<div id="t110" class="t" style="right:807.35px;top:485.22px;text-align:right;font-size:9.8px;color:#444;font-weight:normal;font-style:normal;letter-spacing:0px;-webkit-text-stroke:0.15px currentColor;">10</div>
<div id="t111" class="t" style="left:226.85px;top:485.22px;font-size:9.8px;color:#2a8be0;font-weight:normal;font-style:normal;letter-spacing:0px;transform:scaleX(0.8641);transform-origin:0 0;">2601033AVN24J3</div>
<div id="t112" class="t" style="left:327.25px;top:485.22px;font-size:9.8px;color:#333;font-weight:normal;font-style:normal;letter-spacing:0px;transform:scaleX(0.8798);transform-origin:0 0;">03-01-2026</div>
<svg style="left:0;top:0" width="1" height="1"><circle cx="399" cy="489.55" r="4.1" fill="#ec1c2b"/></svg>
<div id="t113" class="t" style="left:408.05px;top:485.22px;font-size:9.8px;color:#333;font-weight:normal;font-style:normal;letter-spacing:0px;transform:scaleX(0.8698);transform-origin:0 0;">17-01-2026</div>
<div id="t114" class="t" style="left:495.45px;top:485.22px;font-size:9.8px;color:#333;font-weight:normal;font-style:normal;letter-spacing:0px;transform:scaleX(0.8910);transform-origin:0 0;">Shopee</div>
<div id="t115" class="t" style="left:596.15px;top:485.22px;font-size:9.8px;color:#e24a55;font-weight:normal;font-style:italic;letter-spacing:0px;-webkit-text-stroke:0.12px currentColor;transform:scaleX(0.8954);transform-origin:0 0;">(belum diset)</div>
<div id="t116" class="t" style="right:149.95px;top:485.22px;text-align:right;font-size:9.8px;color:#333;font-weight:normal;font-style:normal;letter-spacing:0px;transform:scaleX(0.8642);transform-origin:100% 0;">44,650</div>
<div id="t117" class="t" style="right:62.75px;top:485.22px;text-align:right;font-size:9.8px;color:#333;font-weight:normal;font-style:normal;letter-spacing:0px;transform:scaleX(0.8642);transform-origin:100% 0;">44,650</div>
<svg style="left:0;top:0" width="1" height="1"><g fill="none" stroke="#444" stroke-width="1">
<path d="M981.6 490.15 C982.7 485.75 989.8 485.75 990.9 490.15 C989.8 494.55 982.7 494.55 981.6 490.15 Z"/>
<circle cx="986.25" cy="490.15" r="1.55"/>
<path d="M997 492.95 L1001 488.75" stroke-width="1.2"/><path d="M996.7 494.45 Q996.9 493.35 997.6 492.55" stroke-width="1"/>
<path d="M996.5 494.55 L996.9 492.75 L998.3 493.95 Z" fill="#555" stroke="none"/></g></svg>
</div>
<div class="abs" style="left:181.6px;top:491px;width:818.4px;height:4px;background:#f4f4f4"></div>
<div class="abs" style="left:181.9px;top:491px;width:785.5px;height:6px;background:#c6c6c6;border-radius:3px"></div>
<svg style="left:0;top:0" width="1" height="1">
<defs><filter id="sh" x="-50%" y="-50%" width="200%" height="200%"><feGaussianBlur stdDeviation="2.5"/></filter></defs>
<circle cx="975.4" cy="449" r="19" fill="#000" opacity="0.12" filter="url(#sh)"/>
<circle cx="975.2" cy="448.1" r="18.2" fill="#2bcf63"/>
<path d="M968.4 455.9 L969.6 451.6 A7.1 7.1 0 1 1 972.4 454.6 Z" fill="#62b163" stroke="#fff" stroke-width="1.5" stroke-linejoin="round"/>
<path d="M972.4 444.6 Q971.8 447.6 974.6 450.3 Q977.3 452.6 979.7 451.6 L979.9 450.3 L978.2 449.4 L977.3 450.2 Q975.4 449.3 974.3 447.5 L975.1 446.6 L974.2 444.6 Z" fill="#fff" stroke="#fff" stroke-width="0.5" stroke-linejoin="round"/>
</svg>
</body></html>
